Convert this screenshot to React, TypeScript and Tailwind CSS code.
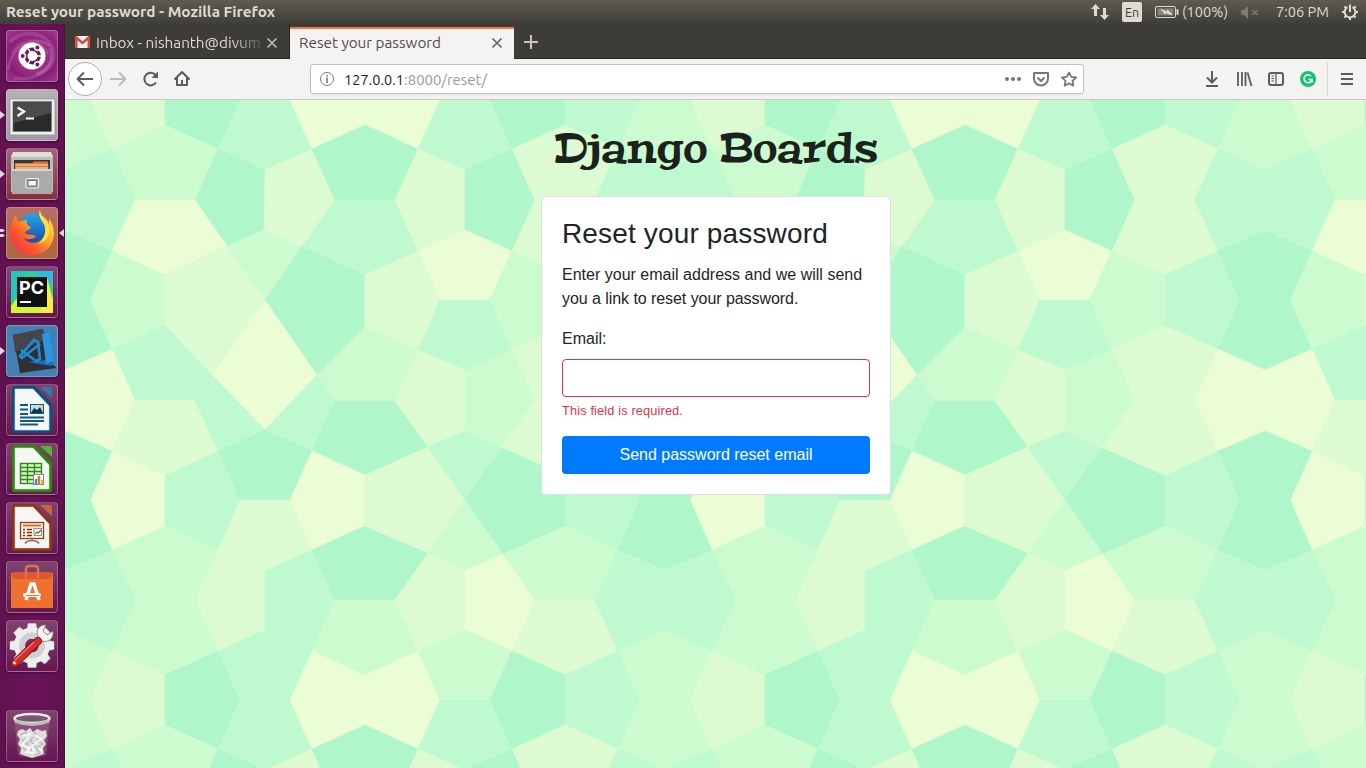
import React from "react";

const A = "#b0f6cb", B = "#bff9d0", C = "#ccfbd0", D = "#dcfbd2", E = "#ebfdd5";

const cells: [string, string][] = [
  [C, "0,-70 47,-49 25,0 47,49 0,70 -47,49 -25,0 -47,-49"],
  [D, "47,-49 100,-25 100,25 47,49 25,0"],
  [A, "153,-49 175,0 153,49 100,25 100,-25"],
  [B, "153,-49 200,-70 247,-49 225,0 247,49 200,70 153,49 175,0"],
  [E, "247,-49 300,-25 353,-49 375,0 353,49 300,25 247,49 225,0"],
  [C, "353,-49 400,-70 447,-49 425,0 375,0"],
  [B, "375,0 425,0 447,49 400,70 353,49"],
  [A, "447,-49 500,-25 500,25 447,49 425,0"],
  [B, "500,-25 553,-49 575,0 553,49 500,25"],
  [C, "100,25 153,49 130,100 70,100 47,49"],
  [B, "0,70 47,49 70,100 47,151 0,131 -47,151 -70,100 -47,49"],
  [A, "153,49 200,70 199,130 162,146 130,100"],
  [D, "200,70 247,49 270,100 237,147 199,130"],
  [A, "300,25 353,49 330,100 270,100 247,49"],
  [E, "70,100 130,100 162,146 99,175 47,151"],
  [A, "0,131 47,151 25,200 47,249 0,270 -47,249 -25,200 -47,151"],
  [C, "47,151 99,175 100,226 47,249 25,200"],
  [D, "99,175 162,146 200,200 147,275 100,226"],
  [C, "162,146 199,130 237,147 200,200"],
  [B, "270,100 330,100 353,151 300,175 237,147"],
  [A, "237,147 300,175 300,226 252,275 200,200"],
  [E, "200,200 252,275 200,330 147,275"],
  [B, "100,226 147,275 130,300 70,300 47,249"],
  [E, "0,270 47,249 70,300 47,351 0,331 -47,351 -70,300 -47,249"],
  [D, "70,300 130,300 153,351 100,376 47,351"],
  [B, "147,275 200,330 153,351 130,300"],
  [C, "300,226 353,250 330,301 270,301 252,275"],
  [B, "252,275 270,301 247,351 200,330"],
  [A, "270,301 330,301 363,347 300,375 247,351"],
  [A, "200,330 247,351 225,400 175,400 153,351"],
  [E, "47,351 100,376 100,426 47,450 25,400"],
  [A, "0,331 47,351 25,400 47,450 0,470 -47,450 -25,400 -47,351"],
  [B, "100,376 153,351 175,400 153,450 100,426"],
  [D, "175,400 225,400 247,450 200,471 153,450"],
  [D, "153,450 200,471 200,530 153,551 130,500"],
  [C, "100,426 153,450 130,500 153,551 100,575 47,551 70,500 47,450"],
  [B, "0,470 47,450 70,500 47,551 0,530 -47,551 -70,500 -47,450"],
  [E, "247,351 300,375 300,426 247,450 225,400"],
  [B, "200,471 247,450 270,500 247,551 200,530"],
  [A, "247,450 300,426 363,453 330,500 270,500"],
  [C, "270,500 330,500 353,551 300,575 247,551"],
  [D, "300,375 363,347 400,400 363,453 300,426"],
  [D, "353,49 400,70 400,130 353,151 330,100"],
  [A, "400,70 447,49 470,100 447,151 400,130"],
  [D, "447,49 500,25 553,49 530,100 553,151 500,175 447,151 470,100"],
  [E, "400,130 447,151 425,200 375,200 353,151"],
  [D, "300,175 353,151 375,200 353,250 300,226"],
  [B, "375,200 425,200 447,249 400,270 353,250"],
  [C, "447,151 500,175 500,226 447,249 425,200"],
  [B, "500,175 553,151 575,200 553,249 500,226"],
  [D, "353,250 400,270 400,331 363,347 330,301"],
  [C, "400,270 447,249 470,300 437,348 400,331"],
  [D, "500,226 553,249 530,300 553,351 500,376 437,348 470,300 447,249"],
  [B, "400,331 437,348 400,400 363,347"],
  [A, "437,348 500,376 500,426 438,454 400,400"],
  [B, "500,376 553,351 575,400 553,450 500,426"],
  [C, "363,453 400,400 438,454 400,470"],
  [D, "363,453 400,470 400,530 353,551 330,500"],
  [E, "400,470 438,454 470,500 447,551 400,530"],
  [C, "438,454 500,426 553,450 530,500 470,500"],
  [D, "470,500 530,500 553,551 500,575 447,551"],
];

function Pattern() {
  const offsets = [[0, 0], [600, 0], [1200, 0], [0, 600], [600, 600], [1200, 600]];
  return (
    <svg className="absolute inset-0" width="1301" height="668" aria-hidden="true">
      <rect width="1301" height="668" fill={B} />
      {offsets.map(([x, y]) => (
        <g key={`${x}-${y}`} transform={`translate(${x} ${y})`}>
          {cells.map(([fill, points], i) => (
            <polygon key={i} points={points} fill={fill} stroke={fill} strokeWidth="0.5" />
          ))}
        </g>
      ))}
    </svg>
  );
}

/* ---------- launcher ---------- */

function Tile({ bg, children, left, right }: { bg: string; children: React.ReactNode; left?: 1 | 2; right?: boolean }) {
  return (
    <div className="relative flex h-[52px] w-full shrink-0 justify-center">
      <div className={`h-[52px] w-[52px] overflow-hidden rounded-[4px] border border-white/25 shadow-[0_1px_3px_rgba(0,0,0,0.4)] ${bg}`}>
        <svg width="52" height="52" viewBox="0 0 52 52" className="-mt-px -ml-px">{children}</svg>
      </div>
      {left === 1 && (
        <svg className="absolute top-[21px] left-0" width="5" height="10"><path d="M0 1 5 5 0 9Z" fill="#dcd4da" /></svg>
      )}
      {left === 2 && (
        <svg className="absolute top-[21px] left-0" width="5" height="10"><path d="M0 1H3L5 2.5 3 4H0ZM0 6H3L5 7.5 3 9H0Z" fill="#dcd4da" /></svg>
      )}
      {right && (
        <svg className="absolute top-[21px] right-0" width="5" height="10"><path d="M5 1 0 5 5 9Z" fill="#dcd4da" /></svg>
      )}
    </div>
  );
}

function Doc({ edge, fold, children }: { edge: string; fold: string; children: React.ReactNode }) {
  return (
    <>
      <path d="M8 2H29L46 20V47Q46 49 44 49H8Q6 49 6 47V4Q6 2 8 2Z" fill={edge} />
      <path d="M9 5H27L43 22V46H9Z" fill="#f6f6f6" stroke="#d8d8d8" strokeWidth="0.6" />
      <path d="M34 3H44Q46 3 46 5V14Z" fill={fold} />
      <g transform="translate(0 -1)">{children}</g>
    </>
  );
}

const gearTeeth = [0, 45, 90, 135, 180, 225, 270, 315];

function Launcher() {
  return (
    <aside className="flex w-[65px] shrink-0 flex-col gap-[7px] border-r border-[#4b0f42] bg-[linear-gradient(90deg,#60124f,#6a1259_50%,#60124f)] pt-[6px]">
      <Tile bg="bg-[radial-gradient(circle,#b64fa2,#8b1d77_65%,#a03c90)]">
        <path d="M4 12C18-2 42 2 47 20C50 34 40 42 30 44" fill="none" stroke="#fff" strokeOpacity=".15" strokeWidth="4" />
        <path d="M6 28C8 10 34 6 42 24M2 40C6 14 28 4 44 16M8 48C30 52 50 38 44 18" fill="none" stroke="#fff" strokeOpacity=".14" strokeWidth="3" />
        <circle cx="26" cy="26" r="13.5" fill="#fff" />
        <circle cx="26.500" cy="26" r="6.700" fill="none" stroke="#6b1c5b" strokeWidth="3.400" />
        {[60, 180, 300].map((a) => (
          <g key={a} transform={`rotate(${a} 26.5 26)`}>
            <circle cx="36" cy="26" r="3.200" fill="#fff" />
            <circle cx="36.300" cy="26" r="2" fill="#6b1c5b" />
          </g>
        ))}
        {[0, 120, 240].map((a) => (
          <path key={a} d="M29 26H35" transform={`rotate(${a} 26.5 26)`} stroke="#fff" strokeWidth="1.300" />
        ))}
      </Tile>
      <Tile bg="bg-[linear-gradient(#b9b1b8,#a49ba2)]" left={1}>
        <rect x="4" y="10" width="45" height="36" rx="1" fill="#efefef" stroke="#8f8b8e" strokeWidth=".7" />
        <rect x="7" y="12.500" width="38.500" height="30" fill="#292b2a" stroke="#777" strokeWidth=".7" />
        <path d="M8 13H45V24L8 34Z" fill="#4a4b4a" />
        <path d="M11.500 18.500 18 22.500 11.500 27" fill="none" stroke="#f1f1f1" strokeWidth="2.500" />
        <path d="M20 29.500H28" stroke="#fff" strokeWidth="2" />
      </Tile>
      <Tile bg="bg-[linear-gradient(#a4647c,#83303f)]" left={1}>
        <path d="M7 4H45L47 9V44H5V9Z" fill="#bdbdbb" />
        <path d="M7 4H45L47 9H5Z" fill="#deddd9" />
        <path d="M8 12H44V25H8Z" fill="#353532" />
        <path d="M9 15H26L28 13.500H42V24H9Z" fill="#de7636" />
        <path d="M9.500 17H42.500M9.500 20H42.500" stroke="#fbe4cd" strokeWidth="1" />
        <path d="M6 21H46V46H6Z" fill="#aaaaa8" />
        <path d="M6 21H46V23H6Z" fill="#d4d4d1" />
        <rect x="20" y="30.500" width="12.500" height="9.500" rx="1.500" fill="#989896" stroke="#eeeeec" strokeWidth="1.200" />
        <rect x="22" y="32.500" width="8.500" height="5.500" fill="#f4f4f3" stroke="#646464" strokeWidth=".8" />
      </Tile>
      <Tile bg="bg-[linear-gradient(#b66f64,#b0653c)]" left={2} right>
        <defs>
          <linearGradient id="ff" x1="1" y1="0" x2="0" y2="1">
            <stop offset="0" stopColor="#fff04a" /><stop offset=".35" stopColor="#ffb52b" /><stop offset=".65" stopColor="#ff5a2c" /><stop offset="1" stopColor="#ee2058" />
          </linearGradient>
          <linearGradient id="globe" x1="0" y1="0" x2="0" y2="1"><stop offset="0" stopColor="#22a8ec" /><stop offset="1" stopColor="#2147a6" /></linearGradient>
        </defs>
        <circle cx="26.500" cy="21.500" r="15" fill="url(#globe)" />
        <path d="M34 3C32 9 35 12 38 17C41 23 39 32 32 35C27 37 20 35 18 31C23 34 27 31 30 30C26 26 21 29 19 26C19 23 24 24 25 20C22 19 20 17 21 13C17 13 14 14 12 15L10 8C6 13 3 21 4 28C6 40 15 48 26 48C39 48 48 38 48 26C48 20 45 14 43 12L43 17C41 10 34 10 34 3Z" fill="url(#ff)" />
        <path d="M34 3C32 9 35 12 38 17C41 23 39 32 32 37C43 34 45 25 42 17C40 11 34 10 34 3Z" fill="#ffe23c" />
      </Tile>
      <Tile bg="bg-[linear-gradient(#8a4478,#61144f)]">
        <path d="M5 5H47V47H5Z" fill="#20d190" />
        <path d="M5 5H18L11 38 5 33Z" fill="#24c9b3" />
        <path d="M22 5H47V22L42 26H11Z" fill="#25d39c" />
        <path d="M30 5H47V16L38 20Z" fill="#2ebce0" />
        <path d="M5 40 11 32 41 11 47 33V47H5Z" fill="#d6f62c" />
        <path d="M41 20 47 34V47H35Z" fill="#f7ee45" />
        <rect x="11" y="11" width="30" height="30" fill="#111" />
        <path d="M14 36H25" stroke="#fff" strokeWidth="2" />
        <text x="13" y="27.500" textLength="25" lengthAdjust="spacingAndGlyphs" className="font-[Inter,sans-serif] text-[18px] font-bold" fill="#fff">PC</text>
      </Tile>
      <Tile bg="bg-[#4580b0]" left={1}>
        <path d="M36 7 45 9 48 36 46 42 17 41 40 38Z" fill="#2489d4" />
        <path d="M7 10 36 4 38 7 41 35 51 43 14 48Z" fill="#303034" />
        <path d="M7 10 36 4 38 7 39 15 9 27Z" fill="#44464b" />
        <path d="M21 37 42 35 48 36 46 41Z" fill="#1672bd" />
        <path d="M36 9 43 7 48 36 40 39Z" fill="#2e94df" />
        <path d="M15 25 30 36 34 34 32 17 28 15 14 31 16 33 34 19" fill="none" stroke="#208bd5" strokeWidth="2.700" />
      </Tile>
      <Tile bg="bg-[linear-gradient(#82416e,#671652)]">
        <Doc edge="#075480" fold="#287dac">
          <path d="M14 22H22M14 26.500H22M14 31H22M14 34.500H38M14 38H38M14 41.500H32" stroke="#155882" strokeWidth="2" />
          <rect x="24.500" y="21.500" width="13" height="9" fill="#b9dcf0" stroke="#155882" />
          <path d="M25 30 28 25 31 27 34 24 37 30Z" fill="#173348" /><circle cx="35" cy="23.500" r="1.500" fill="#f2c834" />
        </Doc>
      </Tile>
      <Tile bg="bg-[linear-gradient(#82416e,#671652)]">
        <Doc edge="#258b07" fold="#4bb733">
          <path d="M14 21H35V41H14Z" transform="translate(6.500 0)" fill="none" />
          <rect x="20.500" y="21.500" width="21" height="20" transform="translate(-6 0)" fill="#dff3d8" stroke="#269007" strokeWidth="1.400" />
          <path d="M14 25.500H35M14 29.500H35M14 33.500H35M14 37.500H35M21.500 21V41M28.500 21V41" stroke="#269007" strokeWidth="1.400" />
          <rect x="27.500" y="32.500" width="10" height="10" fill="#fff" stroke="#888" />
          <path d="M30 42V37" stroke="#2e96d2" strokeWidth="2.500" /><path d="M33 42V34" stroke="#e67825" strokeWidth="2.500" /><path d="M36 42V38" stroke="#ecc51b" strokeWidth="2" />
        </Doc>
      </Tile>
      <Tile bg="bg-[linear-gradient(#82416e,#671652)]">
        <Doc edge="#8d360b" fold="#c2693b">
          <rect x="14.500" y="21.500" width="23" height="16" fill="#fff5ef" stroke="#9d3e0e" strokeWidth="1.300" />
          <path d="M17 24.500H35" stroke="#e36b2d" strokeWidth="2" />
          <path d="M17 28.500H19M17 31.500H19M17 34.500H19M21 28.500H26M21 31.500H26M21 34.500H26" stroke="#7f300a" strokeWidth="1.700" />
          <rect x="28" y="27.500" width="7.500" height="7" fill="#fff" stroke="#777" strokeWidth=".8" />
          <path d="M29 33 31 31 32.500 32 35 29" fill="none" stroke="#388b30" strokeWidth="1.200" />
          <path d="M26 38V40M19 42.500Q21 39.500 26 39.500Q31 39.500 33 42.500" fill="none" stroke="#777" strokeWidth="1.500" />
        </Doc>
      </Tile>
      <Tile bg="bg-[linear-gradient(#82416e,#671652)]">
        <path d="M5 12H47V47H5Z" fill="#ef712e" /><path d="M5 14 8 11H44L47 14 44 18H8Z" fill="#dc592d" />
        <path d="M20 17V8Q20 5 23 5H29Q32 5 32 8V17" fill="none" stroke="#dc7650" strokeWidth="2.500" />
        <path d="M20 39 25 23H28L33 39" fill="none" stroke="#fff" strokeWidth="3.500" />
        <rect x="17" y="32" width="18" height="4" rx="2" fill="#fff" /><path d="M20 34.500H33" stroke="#ef712e" strokeWidth="1.200" />
      </Tile>
      <Tile bg="bg-[linear-gradient(#82416e,#671652)]">
        <g fill="#eeeeef" stroke="#c8c8cb" strokeWidth=".5">
          {gearTeeth.map((a) => <path key={a} d="M21 10 22 3.500H30L31 10Z" transform={`rotate(${a} 26 25.5)`} />)}
        </g>
        <circle cx="26" cy="25.500" r="12.500" fill="none" stroke="#eeeeef" strokeWidth="11" />
        <circle cx="26" cy="25.500" r="10" fill="none" stroke="#d0d0d4" strokeWidth="6" />
        <path d="M29 20 32 17C29 10 34 4 40 5L37 11 41 15 47 11C48 18 43 23 36 21L32 25Z" fill="#f3f3f3" stroke="#777" strokeWidth=".8" />
        <path d="M9 43 32 21" stroke="#8e1714" strokeWidth="8" strokeLinecap="round" />
        <path d="M9 43 32 21" stroke="#d32f2a" strokeWidth="6" strokeLinecap="round" />
        <path d="M9 40 28 22" stroke="#ef7771" strokeWidth="1.300" /><circle cx="8.500" cy="43" r="1.400" fill="#eee" />
      </Tile>
      <div className="h-[24px] shrink-0" />
      <Tile bg="bg-[linear-gradient(#82416e,#671652)]">
        <path d="M8 9 12 45Q26 51 40 45L44 9Z" fill="#a67b9d" fillOpacity=".4" />
        <path d="M12 21 16 19 20 21 24 18 27 22 31 19 36 21 40 20 41 26 38 30 40 34 37 38 38 44 26 48 14 44 15 38 12 34 14 29 11 25Z" fill="#dedede" />
        <path d="M14 25 20 22 22 27 17 30 22 34 17 38 22 43M28 22 33 27 31 31 37 34 30 38 34 43 29 45 25 39 29 35 24 31 27 27" fill="none" stroke="#b9b9bb" strokeWidth="1.300" />
        <path d="M17 26 24 24 20 30 16 35 24 38 20 42 28 43 26 36 35 29 30 25M33 38 36 41" fill="none" stroke="#fafafa" strokeWidth="1.700" />
        <ellipse cx="26" cy="8.500" rx="17.500" ry="4.500" fill="#7a5875" stroke="#e8e8e8" strokeWidth="2.500" />
        <path d="M9 11Q26 18 43 11" fill="none" stroke="#bdbdbd" strokeWidth="3" />
      </Tile>
    </aside>
  );
}

/* ---------- system bar ---------- */

const ui = "font-['Ubuntu','Noto_Sans',sans-serif]";

function SystemBar() {
  return (
    <header className={`flex h-6 shrink-0 items-center bg-[linear-gradient(#5f5b50,#3f3e39)] text-[#dfdbd2] ${ui}`}>
      <svg width="280" height="24" className="shrink-0"><text x="6" y="17" textLength="269" lengthAdjust="spacingAndGlyphs" className="text-[14px] font-bold" fill="#dfdbd2">Reset your password - Mozilla Firefox</text></svg>
      <div className="flex-1" />
      <svg width="276" height="24" className="shrink-0" fill="#dfdbd2">
        <path d="M5.500 4 10 9H7V16H4V9H1ZM14.500 20 10 15H13V8H16V15H19Z" />
        <rect x="32" y="2" width="20" height="20" rx="2" />
        <text x="35" y="17" textLength="14" lengthAdjust="spacingAndGlyphs" className="text-[13px]" fill="#3c3b37">En</text>
        <rect x="65.500" y="6.500" width="20" height="11" rx="1.500" fill="none" stroke="#dfdbd2" />
        <rect x="67.500" y="8.500" width="16" height="7" fill="#858277" /><rect x="86.500" y="9" width="2" height="6" rx="1" />
        <path d="M70 8.500 77 11.500V9L82 14V15.500L75.500 13V15Z" />
        <text x="92" y="17" textLength="46" lengthAdjust="spacingAndGlyphs" className="text-[14px]">(100%)</text>
        <path d="M151 10H154L158 6V19L154 15H151Z" fill="#7e7b71" />
        <path d="M162.500 10 167.500 15M167.500 10 162.500 15" stroke="#7e7b71" strokeWidth="1.600" />
        <text x="186" y="17" textLength="53" lengthAdjust="spacingAndGlyphs" className="text-[14px]">7:06 PM</text>
        <g transform="translate(260 12)" fill="none" stroke="#dfdbd2" strokeWidth="2">
          <path d="M-2.500-4.800A5.400 5.400 0 1 0 2.500-4.800M0-7.500V0" />
          {[45, 90, 135, 180, 225, 270, 315].map((a) => <path key={a} d="M0-5.500V-8" transform={`rotate(${a})`} />)}
        </g>
      </svg>
    </header>
  );
}

/* ---------- browser ---------- */

function Tabs() {
  return (
    <div className="flex h-[35px] shrink-0 border-b border-[#2a2925] bg-[#3d3c37]">
      <div className="flex h-[35px] w-[225px] shrink-0 items-center border-r border-[#262521] pl-[10px]">
        <svg width="15" height="12" viewBox="0 0 15 12"><rect width="15" height="12" rx="1" fill="#f1f1f1" /><path d="M1.300 12V1.500L7.500 7 13.700 1.500V12" fill="none" stroke="#db4437" strokeWidth="2.400" /></svg>
        <svg width="170" height="32" className="ml-[6px] shrink-0 [mask-image:linear-gradient(90deg,#000_135px,transparent_170px)]"><text x="0" y="22" textLength="165" lengthAdjust="spacingAndGlyphs" className={`text-[14px] ${ui}`} fill="#dfdbd2">Inbox - nishanth@divum</text></svg>
        <svg width="12" height="12" className="mt-[2px] shrink-0"><path d="M1.500 1.500 10.500 10.500M10.500 1.500 1.500 10.500" stroke="#bdb9b1" strokeWidth="1.700" /></svg>
      </div>
      <div className="mt-[3px] flex h-[32px] w-[224px] shrink-0 items-center justify-between border-t-2 border-[#f07746] bg-[#f4f3f2] pr-[11px] pl-[9px]">
        <svg width="144" height="30"><text x="0" y="19" textLength="142" lengthAdjust="spacingAndGlyphs" className={`text-[14px] ${ui}`} fill="#4c4c4c">Reset your password</text></svg>
        <svg width="12" height="12" className="mb-[2px]"><path d="M1.500 1.500 10.500 10.500M10.500 1.500 1.500 10.500" stroke="#666" strokeWidth="1.700" /></svg>
      </div>
      <svg width="32" height="35"><path d="M10 18H24M17 11V25" stroke="#c9c5bd" strokeWidth="2" /></svg>
    </div>
  );
}

function Toolbar() {
  return (
    <div className="flex h-[41px] shrink-0 items-center border-b border-[#c9c7c5] bg-[#f4f3f2]">
      <svg width="245" height="40" className="shrink-0" fill="none" stroke="#5b5b5b" strokeWidth="2">
        <circle cx="20" cy="20" r="16.500" fill="#fff" stroke="#b0aeac" strokeWidth="1" />
        <path d="M13 20H28M19 13.500 12.500 20 19 26.500" strokeLinejoin="round" />
        <path d="M45 20H60M54 13.500 60.500 20 54 26.500" stroke="#bbb" strokeLinejoin="round" />
        <path d="M90.500 16A6.300 6.300 0 1 0 91 23.500" />
        <path d="M93 12.500V19H86.500Z" fill="#5b5b5b" stroke="none" />
        <path d="M109.500 20.500 117 13 124.500 20.500M112 19V26H122V19M117 26V21" strokeLinejoin="round" />
      </svg>
      <div className="flex h-[30px] w-[774px] shrink-0 items-center rounded-[3px] border border-[#c2c0be] bg-white shadow-[0_1px_2px_rgba(0,0,0,0.06)]">
        <svg width="33" height="28" className="shrink-0"><circle cx="16" cy="14" r="6.500" fill="none" stroke="#777" /><path d="M16 12.500V18M16 10V11.500" stroke="#777" strokeWidth="1.600" /></svg>
        <svg width="150" height="28" className={`text-[14px] ${ui}`}>
          <text x="0" y="19.500" textLength="60" lengthAdjust="spacingAndGlyphs" fill="#222">127.0.0.1</text>
          <text x="60" y="19.500" textLength="83" lengthAdjust="spacingAndGlyphs" fill="#999">:8000/reset/</text>
        </svg>
        <div className="flex-1" />
        <svg width="79" height="28" fill="none" stroke="#777" strokeWidth="2">
          <g fill="#777" stroke="none"><circle cx="3" cy="14" r="2" /><circle cx="9" cy="14" r="2" /><circle cx="15" cy="14" r="2" /></g>
          <path d="M30 8H44V13.500A7 7 0 0 1 30 13.500Z" strokeLinejoin="round" /><path d="M33.500 12.500 37 16 40.500 12.500" />
          <path d="M65 7.500 67.200 11.800 72 12.500 68.500 15.900 69.300 20.700 65 18.400 60.700 20.700 61.500 15.900 58 12.500 62.800 11.800Z" strokeLinejoin="round" strokeWidth="1.800" />
        </svg>
      </div>
      <div className="flex-1" />
      <svg width="170" height="40" className="shrink-0" fill="none" stroke="#5b5b5b" strokeWidth="2">
        <path d="M16 12V24M11 18.500 16 23.500 21 18.500M10 27H22" />
        <path d="M42 13V27M46 13V27M49.500 13V27M51.500 13.500 55.500 27" strokeWidth="1.800" />
        <rect x="73" y="14" width="14" height="12" rx="2" /><path d="M80 14V26M75.500 17H78M75.500 19.500H78M75.500 22H78" strokeWidth="1.200" />
        <circle cx="112" cy="20" r="8" fill="#11c573" stroke="none" />
        <path d="M115 17A4 4 0 1 0 116 20.500H112.500M116 20.500V23.500" stroke="#fff" strokeWidth="1.500" />
        <path d="M131.500 3V37" stroke="#d6d4d2" strokeWidth="1" />
        <path d="M145 15H157M145 20H157M145 25H157" />
      </svg>
    </div>
  );
}

function Page() {
  return (
    <main className="relative flex min-h-0 flex-1 flex-col items-center overflow-hidden pl-px font-['Liberation_Sans',Arial,sans-serif] text-[#212529]">
      <Pattern />
      <h1 className="relative mt-[6px] h-[90px]">
        <svg width="350" height="90" className="overflow-visible"><text x="13" y="56" textLength="324" lengthAdjust="spacingAndGlyphs" className="font-['Peralta','DejaVu_Serif',serif] text-[40px] font-normal" fill="#1b211c">Django Boards</text></svg>
      </h1>
      <section className="relative flex h-[299px] w-[350px] shrink-0 flex-col rounded-[4px] border border-[#dcdfdd] bg-white px-5 pt-5">
        <h2 className="text-[28px] leading-[34px] tracking-[0.150px]">Reset your password</h2>
        <p className="mt-[12px] text-[16px] leading-6 whitespace-nowrap">
          <span className="block tracking-[0.010px]">Enter your email address and we will send</span>
          <span className="block tracking-[-0.060px]">you a link to reset your password.</span>
        </p>
        <label htmlFor="email" className="mt-4 text-[16px] leading-6">Email:</label>
        <input id="email" className="mt-2 h-[38px] shrink-0 rounded-[4px] border border-[#dc3545] bg-white px-3 outline-none" />
        <p className="mt-1 text-[12.800px] leading-[19px] tracking-[0.130px] text-[#dc3545]">This field is required.</p>
        <button className="mt-4 h-[38px] shrink-0 rounded-[4px] bg-[#007bff] text-[16px] text-white">Send password reset email</button>
      </section>
    </main>
  );
}

export default function App() {
  return (
    <div className="flex h-[768px] w-[1366px] flex-col overflow-hidden">
      <SystemBar />
      <div className="flex min-h-0 flex-1">
        <Launcher />
        <div className="flex min-w-0 flex-1 flex-col">
          <Tabs />
          <Toolbar />
          <Page />
        </div>
      </div>
    </div>
  );
}
